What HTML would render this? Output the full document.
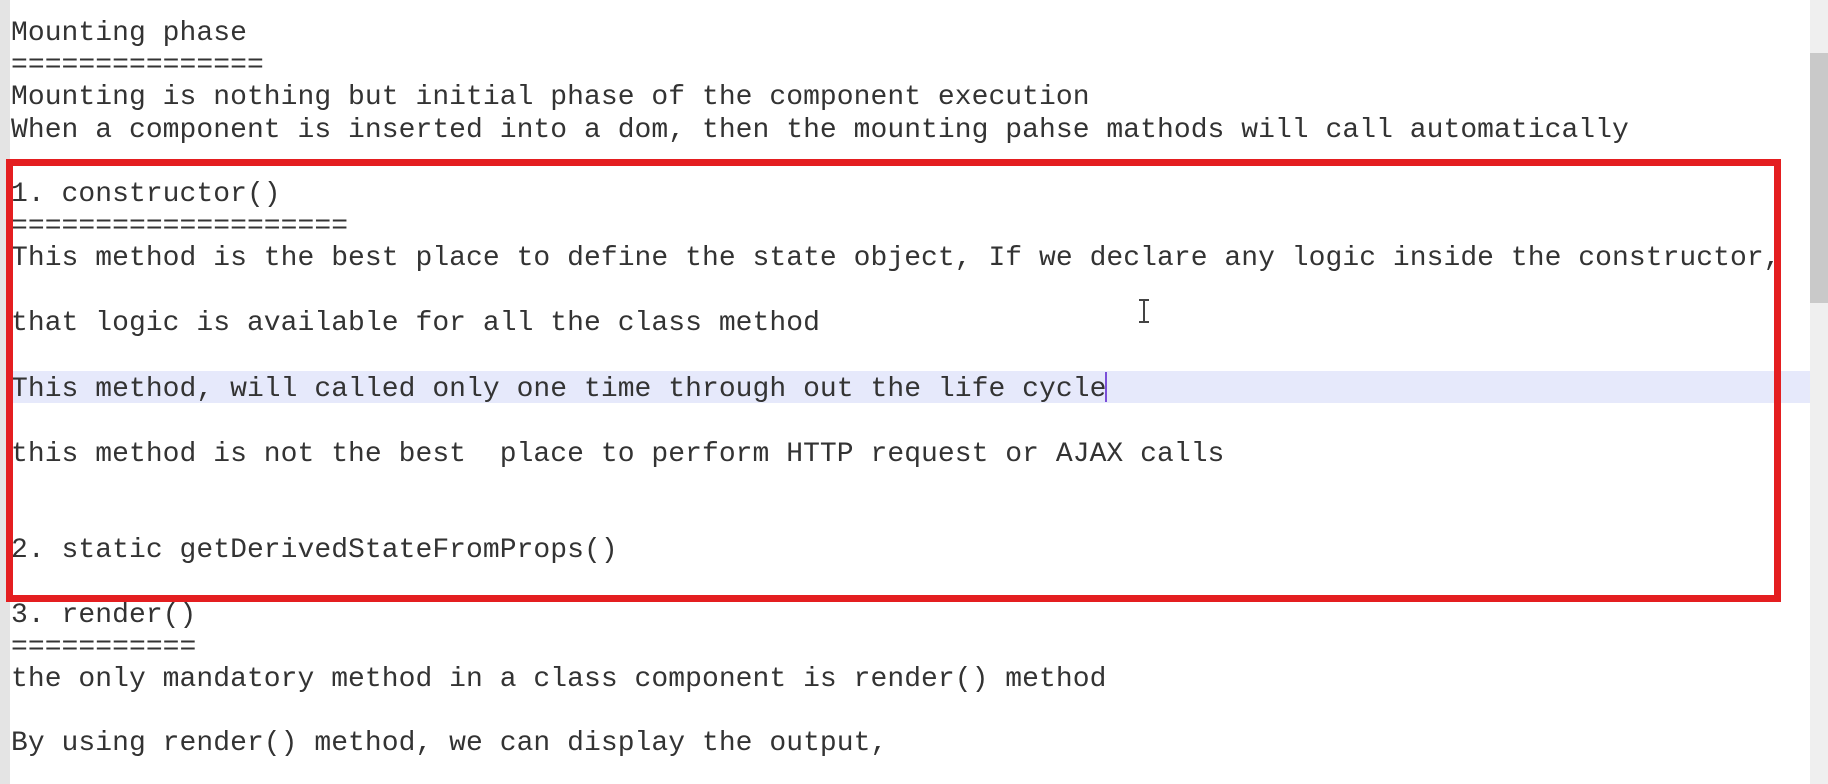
<!DOCTYPE html>
<html><head><meta charset="utf-8"><style>
html,body{margin:0;padding:0;width:1828px;height:784px;overflow:hidden;background:#fff}
.strip{position:absolute;left:0;top:0;width:10px;height:784px;background:#e4e4e4}
.sb{position:absolute;left:1810px;top:0;width:18px;height:784px;background:#efefef}
.thumb{position:absolute;left:1810px;top:53px;width:18px;height:250px;background:#c9c9c9}
.hl{position:absolute;left:10px;top:371px;width:1800px;height:32px;background:#e6e9fb}
pre{position:absolute;left:11px;top:18px;margin:0;font-family:"Liberation Mono",monospace;font-size:28px;line-height:32.2px;color:#333;letter-spacing:0.05px}
.red{position:absolute;left:6px;top:159px;width:1761px;height:429px;border:7.5px solid #e41e20}
.caret{display:inline-block;width:2px;height:30px;background:#7a4fd8;vertical-align:-6px;margin-left:-1px}
.ib{position:absolute;left:1143px;top:300px;width:2px;height:22px;background:#444}
.ib:before,.ib:after{content:"";position:absolute;left:-4px;width:10px;height:2px;background:#444}
.ib:before{top:-1px}.ib:after{bottom:-1px}
</style></head><body>
<div class="strip"></div>
<div class="hl"></div>
<div class="sb"></div><div class="thumb"></div>
<pre>Mounting phase
===============
Mounting is nothing but initial phase of the component execution
When a component is inserted into a dom, then the mounting pahse mathods will call automatically

1. constructor()
====================
This method is the best place to define the state object, If we declare any logic inside the constructor,

that logic is available for all the class method

This method, will called only one time through out the life cycle<span class="caret"></span>

this method is not the best  place to perform HTTP request or AJAX calls


2. static getDerivedStateFromProps()

3. render()
===========
the only mandatory method in a class component is render() method

By using render() method, we can display the output,</pre>
<div class="red"></div>
<div class="ib"></div>
</body></html>
